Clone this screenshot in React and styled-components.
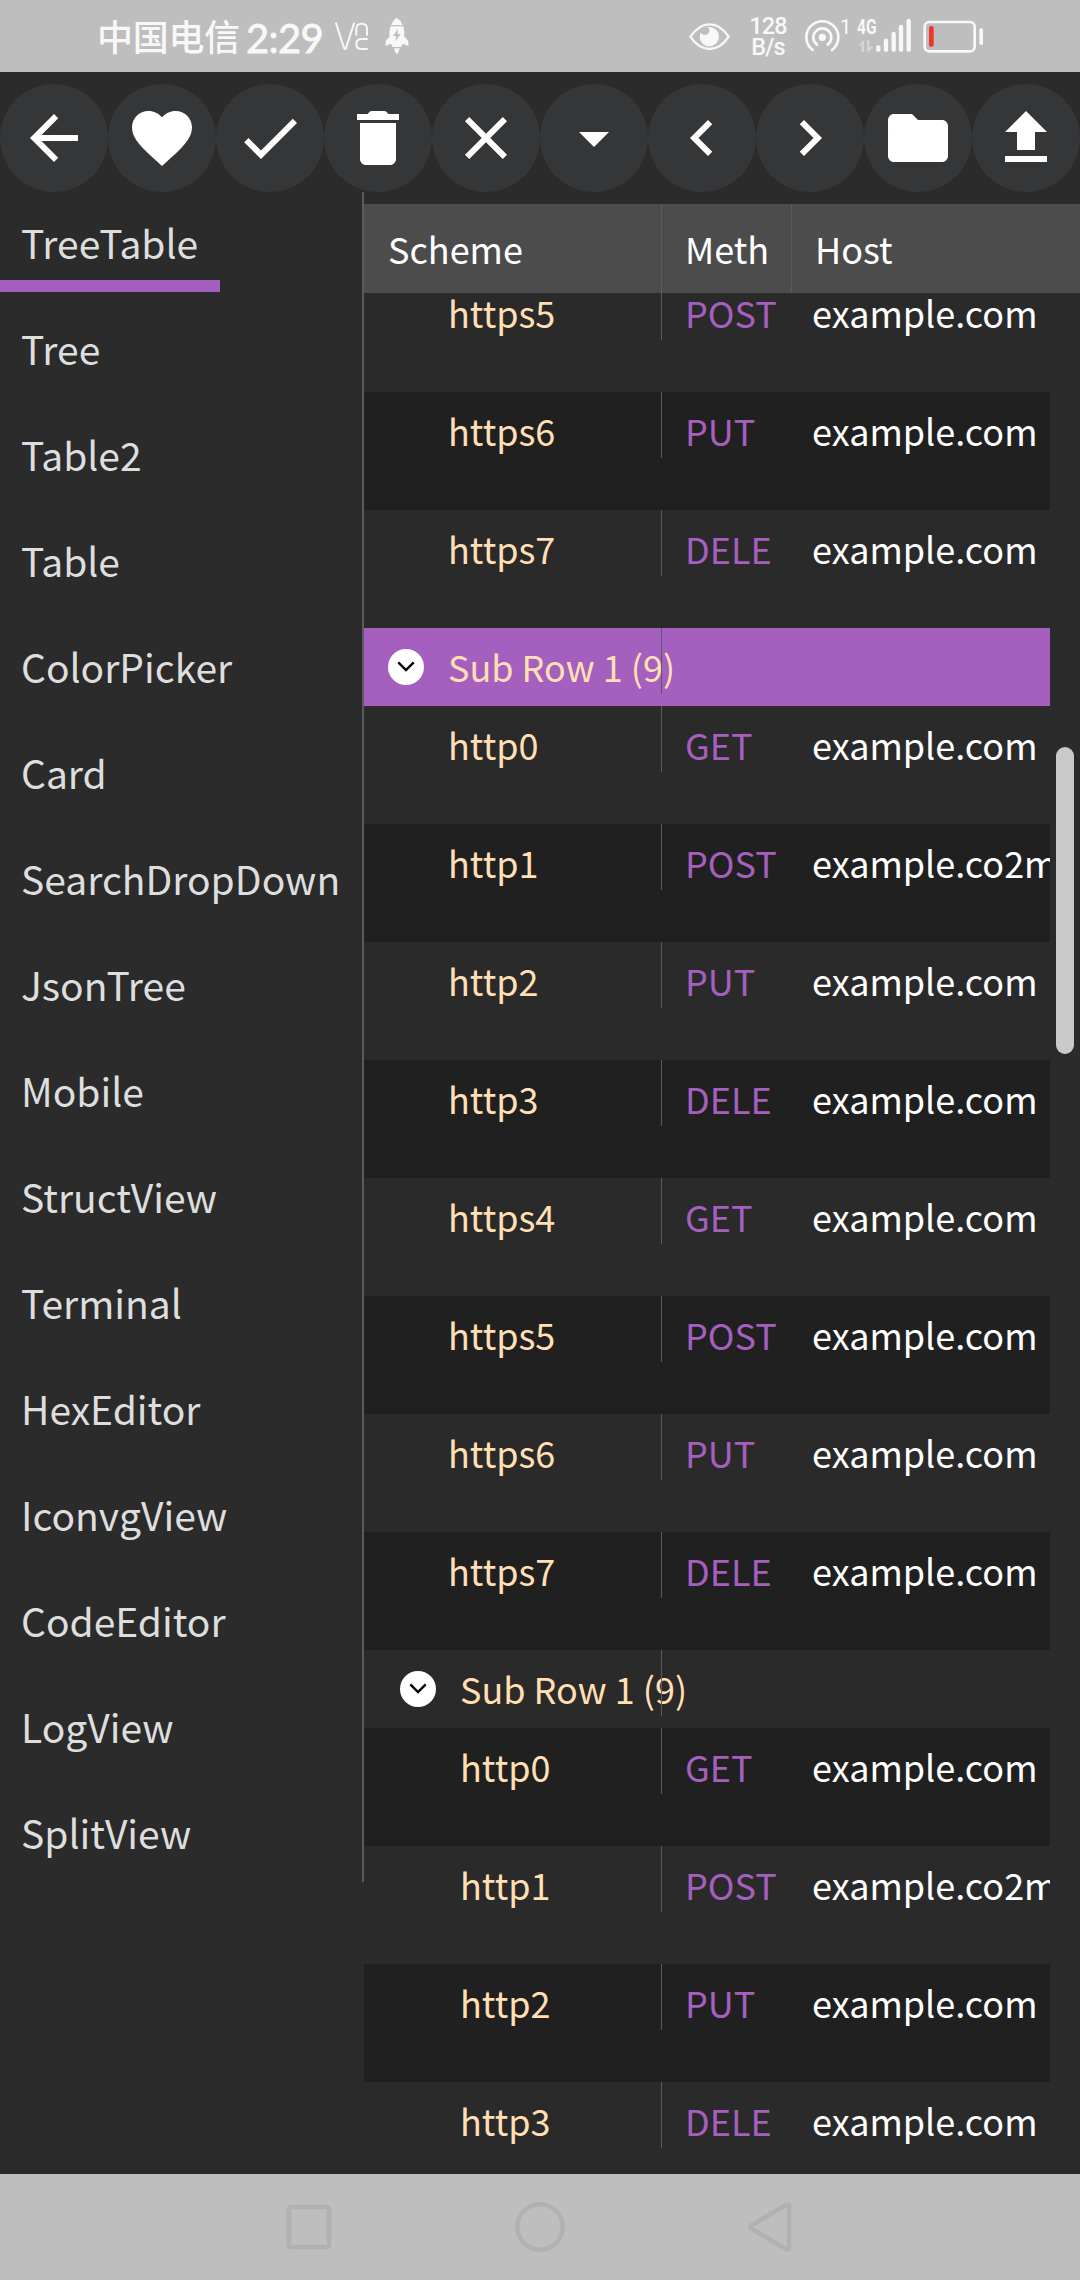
import React from 'react';
import styled, { createGlobalStyle } from 'styled-components';

const GlobalStyle = createGlobalStyle`
  * { box-sizing: border-box; }
  body {
    margin: 0;
    background: #2b2b2b;
    font-family: "Noto Sans CJK SC", "Noto Sans", sans-serif;
  }
`;

const Screen = styled.div`
  display: flex;
  flex-direction: column;
  width: 1080px;
  height: 2280px;
  overflow: hidden;
  background: #2b2b2b;
`;

/* ---------- status bar ---------- */

const StatusBar = styled.header`
  display: flex;
  justify-content: space-between;
  flex: none;
  height: 72px;
  padding: 0 96px 0 98px;
  background: #bebebe;
  color: #f8f8f8;
`;

const StatusGroup = styled.div`
  display: flex;
  height: 72px;
`;

const Glyph = styled.svg`
  display: block;
  flex: none;
  width: ${(p) => p.$w}px;
  height: 72px;
  margin-left: ${(p) => p.$gap || 0}px;
  fill: none;
  stroke: none;
`;

const Carrier = styled.span`
  width: 149px;
  margin-left: -1px;
  font-size: 36px;
  font-weight: 500;
  line-height: 71px;
  letter-spacing: -0.3px;
  white-space: nowrap;
`;

const Clock = styled.span`
  width: 89px;
  font-family: Lato, sans-serif;
  font-size: 40px;
  font-weight: 400;
  line-height: 76px;
  letter-spacing: -0.6px;
  white-space: nowrap;
  -webkit-text-stroke: 0.8px #f8f8f8;
`;

const Speed = styled.div`
  display: flex;
  flex-direction: column;
  align-items: center;
  width: 44px;
  margin-left: 16px;
  padding-top: 16px;
  font-family: Roboto, sans-serif;
  font-size: 23.5px;
  font-weight: 500;
  line-height: 21px;
  letter-spacing: -0.8px;
`;

const HotspotCount = styled.span`
  width: 11px;
  margin-left: -1px;
  padding-top: 15px;
  font-family: Roboto, sans-serif;
  font-size: 20px;
  line-height: 24px;
  letter-spacing: -0.5px;
`;

const Signal = styled.div`
  position: relative;
  margin-left: 7px;
`;

const NetworkType = styled.span`
  position: absolute;
  top: 15px;
  left: -1px;
  font-family: Roboto, sans-serif;
  font-size: 20px;
  font-weight: 700;
  line-height: 24px;
  transform: scaleX(0.78);
  transform-origin: left;
`;

/* ---------- toolbar ---------- */

const Toolbar = styled.nav`
  display: flex;
  flex: none;
  height: 120px;
  padding-top: 12px;
`;

const ToolButton = styled.button`
  display: flex;
  align-items: center;
  justify-content: center;
  width: 108px;
  height: 108px;
  padding: 0;
  border: 0;
  border-radius: 50%;
  background: #353638;
`;

const ToolIcon = styled.svg`
  width: 72px;
  height: 72px;
  fill: #fff;
`;

/* ---------- content ---------- */

const Main = styled.main`
  display: flex;
  align-items: flex-start;
  flex: none;
  height: 1982px;
`;

const Sidebar = styled.aside`
  display: flex;
  flex-direction: column;
  align-items: flex-start;
  gap: 6px;
  width: 364px;
  border-right: 2px solid #5a5a5a;
`;

const Tab = styled.div`
  height: 100px;
  padding: 21px 22px 0 21px;
  border-bottom: 12px solid ${(p) => (p.$active ? '#a55fbf' : 'transparent')};
  color: #dedede;
  font-size: 39px;
  line-height: 58px;
  white-space: nowrap;
`;

const TablePanel = styled.section`
  display: flex;
  flex-direction: column;
  width: 716px;
  height: 1982px;
  padding-top: 12px;
`;

const TableHead = styled.div`
  display: flex;
  flex: none;
  height: 89px;
  background: #4c4c4c;
`;

const HeadCell = styled.div`
  width: ${(p) => p.$w}px;
  padding: 18px 0 0 ${(p) => p.$pad}px;
  border-right: ${(p) => (p.$last ? '0' : '1px solid #5c5c5c')};
  color: #fff;
  font-size: 36px;
  line-height: 52px;
`;

const Viewport = styled.div`
  display: flex;
  flex: 1;
  min-height: 0;
  overflow: hidden;
`;

const Rows = styled.div`
  flex: none;
  width: 686px;
  margin-top: -19px;
`;

const Row = styled.div`
  display: flex;
  height: ${(p) => (p.$group ? 78 : 118)}px;
  background: ${(p) => (p.$selected ? '#a55fbf' : p.$dark ? '#202020' : '#2a2a2a')};
  font-size: 36px;
  line-height: 52px;
  white-space: nowrap;
  overflow: hidden;
`;

const SchemeCell = styled.div`
  position: relative;
  display: flex;
  gap: 24px;
  width: 298px;
  height: 66px;
  padding: 12px 0 0 ${(p) => p.$indent}px;
  color: #ffdfb3;

  &::after {
    content: '';
    position: absolute;
    top: 0;
    right: 0;
    width: 1px;
    height: 66px;
    background: #5c5c5c;
  }
`;

const MethodCell = styled.div`
  width: 127px;
  padding: 12px 0 0 23px;
  color: #a55fbf;
`;

const HostCell = styled.div`
  flex: 1;
  min-width: 0;
  padding: 12px 0 0 23px;
  color: #fff;
`;

const Chevron = styled.svg`
  flex: none;
  width: 36px;
  height: 36px;
  margin-top: 9px;
`;

const ScrollTrack = styled.div`
  width: 30px;
  padding: 454px 6px 0;
`;

const ScrollThumb = styled.div`
  height: 307px;
  border-radius: 9px;
  background: #c9c9c9;
`;

/* ---------- navigation bar ---------- */

const NavBar = styled.footer`
  display: flex;
  align-items: center;
  justify-content: space-between;
  flex: none;
  height: 106px;
  padding: 0 286px 0 284px;
  background: #bebebe;
`;

const NavIcon = styled.svg`
  width: 50px;
  height: 54px;
  overflow: visible;
  fill: none;
  stroke: #b1b1b1;
  stroke-width: 4.5;
  stroke-linejoin: round;
`;

const tools = [
  ['back', 'M20 11H7.83l5.59-5.59L12 4l-8 8 8 8 1.41-1.41L7.83 13H20v-2z'],
  ['favorite', 'M12 21.35l-1.45-1.32C5.4 15.36 2 12.28 2 8.5 2 5.42 4.42 3 7.5 3c1.74 0 3.41.81 4.5 2.09C13.09 3.81 14.76 3 16.5 3 19.58 3 22 5.42 22 8.5c0 3.78-3.4 6.86-8.55 11.54L12 21.35z'],
  ['check', 'M9 16.17L4.83 12l-1.42 1.41L9 19 21 7l-1.41-1.41z'],
  ['delete', 'M6 19c0 1.1.9 2 2 2h8c1.1 0 2-.9 2-2V7H6v12zM19 4h-3.5l-.71-.71c-.18-.18-.44-.29-.7-.29H9.91c-.26 0-.52.11-.7.29L8.5 4H5v2h14V4z'],
  ['close', 'M19 6.41L17.59 5 12 10.59 6.41 5 5 6.41 10.59 12 5 17.59 6.41 19 12 13.41 17.59 19 19 17.59 13.41 12z'],
  ['menu', 'M7 10l5 5 5-5z'],
  ['previous', 'M15.41 7.41L14 6l-6 6 6 6 1.41-1.41L10.83 12z'],
  ['next', 'M10 6L8.59 7.41 13.17 12l-4.58 4.59L10 18l6-6z'],
  ['folder', 'M10 4H4c-1.1 0-1.99.9-1.99 2L2 18c0 1.1.9 2 2 2h16c1.1 0 2-.9 2-2V8c0-1.1-.9-2-2-2h-8l-2-2z'],
  ['upload', 'M9 16h6v-6h4l-7-7-7 7h4zm-4 2h14v2H5z'],
];

const tabs = [
  'TreeTable', 'Tree', 'Table2', 'Table', 'ColorPicker', 'Card', 'SearchDropDown', 'JsonTree',
  'Mobile', 'StructView', 'Terminal', 'HexEditor', 'IconvgView', 'CodeEditor', 'LogView', 'SplitView',
];

const requests = [
  ['http0', 'GET'], ['http1', 'POST'], ['http2', 'PUT'], ['http3', 'DELE'],
  ['https4', 'GET'], ['https5', 'POST'], ['https6', 'PUT'], ['https7', 'DELE'],
];

const leaf = (indent) => ([scheme, method]) => ({
  scheme,
  method,
  host: scheme === 'http1' ? 'example.co2m' : 'example.com',
  indent,
});

const rows = [
  ...requests.slice(5).map(leaf(84)),
  { group: true, selected: true, scheme: 'Sub Row 1 (9)', indent: 24 },
  ...requests.map(leaf(84)),
  { group: true, scheme: 'Sub Row 1 (9)', indent: 36 },
  ...requests.slice(0, 4).map(leaf(96)),
];

const darkRows = new Set([1, 5, 7, 9, 11, 13, 15]);

function StatusArea() {
  return (
    <StatusBar>
      <StatusGroup>
        <Carrier>中国电信</Carrier>
        <Clock>2:29</Clock>
        <Glyph $w={35} viewBox="765 0 105 216">
          <g stroke="#f8f8f8" strokeWidth="6" strokeLinecap="round" strokeLinejoin="round">
            <path d="M768 70L792 144Q795 150 798 144L822 70" />
            <path d="M829 104V86Q829 71 845 71Q861 71 861 86V104" />
            <path d="M861 117H844Q829 118 829 132Q829 147 844 147H861" />
          </g>
        </Glyph>
        <Glyph $w={24} $gap={15} viewBox="914 0 72 216">
          <g fill="#f8f8f8">
            <path d="M949 53Q962 61 967 75H932Q937 61 949 53Z" />
            <path d="M930 79H969Q974 97 971 109L984 123V138L967 131L962 141H937L932 131L916 138V123L928 109Q925 97 930 79Z" />
            <path d="M941 145H958L955 155L950 163L944 155Z" />
          </g>
          <path d="M953 86L938 108H948L945 124L961 102H951Z" fill="#bebebe" />
        </Glyph>
      </StatusGroup>

      <StatusGroup>
        <Glyph $w={41} viewBox="87 0 123 216">
          <path d="M91 110Q116 73 149 73Q182 73 206 110Q182 147 149 147Q116 147 91 110Z" stroke="#f8f8f8" strokeWidth="7" strokeLinejoin="round" />
          <circle cx="148" cy="110" r="29" fill="#f8f8f8" />
          <path d="M121 98Q132 108 142 103Q152 96 146 83L128 82Z" fill="#bebebe" />
        </Glyph>
        <Speed>
          <span>128</span>
          <span>B/s</span>
        </Speed>
        <Glyph $w={37} $gap={14} viewBox="432 0 111 216">
          <circle cx="487" cy="112" r="11" fill="#f8f8f8" />
          <g stroke="#f8f8f8" strokeWidth="8" strokeLinecap="round">
            <path d="M471 134A27 27 0 1 1 503 134" />
            <path d="M458 150A48 48 0 1 1 516 150" />
          </g>
        </Glyph>
        <HotspotCount>1</HotspotCount>
        <Signal>
          <NetworkType>4G</NetworkType>
          <Glyph $w={54} viewBox="594 0 162 216">
            <path d="M594 136L612 121V156H605V136ZM621 121H628V140H641L622 157Z" fill="#d6d6d6" />
            <g stroke="#f8f8f8" strokeWidth="13" strokeLinecap="round">
              <path d="M655 142V149M678 122V149M701 102V149M723 81V149M746 63V149" />
            </g>
          </Glyph>
        </Signal>
        <Glyph $w={61} $gap={11} viewBox="789 0 183 216">
          <rect x="794" y="66" width="150" height="88" rx="14" stroke="#f8f8f8" strokeWidth="8" />
          <rect x="807" y="78" width="14" height="62" rx="6" fill="#f03426" />
          <rect x="958" y="85" width="11" height="50" rx="5" fill="#f8f8f8" />
        </Glyph>
      </StatusGroup>
    </StatusBar>
  );
}

function TableRow({ row, dark }) {
  return (
    <Row $group={row.group} $selected={row.selected} $dark={dark}>
      <SchemeCell $indent={row.indent}>
        {row.group && (
          <Chevron viewBox="0 0 36 36">
            <circle cx="18" cy="18" r="18" fill="#fff" />
            <path d="M10.3 13.3L18 21L25.7 13.3" fill="none" stroke="#000" strokeWidth="2.4" />
          </Chevron>
        )}
        <span>{row.scheme}</span>
      </SchemeCell>
      {!row.group && <MethodCell>{row.method}</MethodCell>}
      {!row.group && <HostCell>{row.host}</HostCell>}
    </Row>
  );
}

export default function App() {
  return (
    <Screen>
      <GlobalStyle />
      <StatusArea />
      <Toolbar>
        {tools.map(([name, d]) => (
          <ToolButton key={name} aria-label={name}>
            <ToolIcon viewBox="0 0 24 24"><path d={d} /></ToolIcon>
          </ToolButton>
        ))}
      </Toolbar>
      <Main>
        <Sidebar>
          {tabs.map((name, i) => (
            <Tab key={name} $active={i === 0}>{name}</Tab>
          ))}
        </Sidebar>
        <TablePanel>
          <TableHead>
            <HeadCell $w={298} $pad={24}>Scheme</HeadCell>
            <HeadCell $w={130} $pad={23}>Meth</HeadCell>
            <HeadCell $w={288} $pad={23} $last>Host</HeadCell>
          </TableHead>
          <Viewport>
            <Rows>
              {rows.map((row, i) => (
                <TableRow key={i} row={row} dark={darkRows.has(i)} />
              ))}
            </Rows>
            <ScrollTrack>
              <ScrollThumb />
            </ScrollTrack>
          </Viewport>
        </TablePanel>
      </Main>
      <NavBar>
        <NavIcon viewBox="0 0 50 54"><rect x="5" y="7" width="40" height="40" rx="2" /></NavIcon>
        <NavIcon viewBox="0 0 50 54"><circle cx="26" cy="27" r="22.7" /></NavIcon>
        <NavIcon viewBox="0 0 50 54"><path d="M45 5V49Q44 50 42 49L7 28.5Q5 27 7 25.5L42 5Q44 4 45 5Z" /></NavIcon>
      </NavBar>
    </Screen>
  );
}
